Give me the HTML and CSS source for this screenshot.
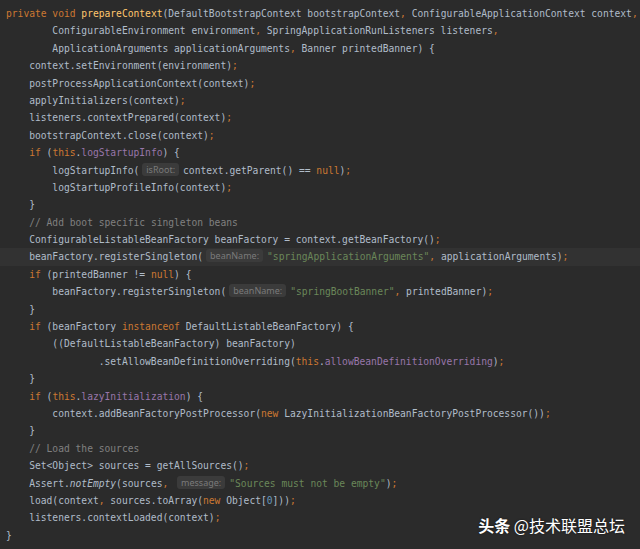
FILE: index.html
```html
<!DOCTYPE html>
<html lang="zh">
<head>
  <meta charset="UTF-8" />
  <meta name="viewport" content="width=device-width, initial-scale=1.0"/>
  <title>prepareContext</title>
  <link rel="stylesheet" href="styles.css">
</head>
<body>
  <div class="editor">
    <div class="code">
      <div class="line"><span class="kw">private void</span> <span class="fn">prepareContext</span>(DefaultBootstrapContext bootstrapContext<span class="kw">,</span> ConfigurableApplicationContext context<span class="kw">,</span></div>
      <div class="line">        ConfigurableEnvironment environment<span class="kw">,</span> SpringApplicationRunListeners listeners<span class="kw">,</span></div>
      <div class="line">        ApplicationArguments applicationArguments<span class="kw">,</span> Banner printedBanner) {</div>
      <div class="line">    context.setEnvironment(environment)<span class="kw">;</span></div>
      <div class="line">    postProcessApplicationContext(context)<span class="kw">;</span></div>
      <div class="line">    applyInitializers(context)<span class="kw">;</span></div>
      <div class="line">    listeners.contextPrepared(context)<span class="kw">;</span></div>
      <div class="line">    bootstrapContext.close(context)<span class="kw">;</span></div>
      <div class="line">    <span class="kw">if</span> (<span class="kw">this</span>.<span class="field">logStartupInfo</span>) {</div>
      <div class="line">        logStartupInfo(<span class="hint">isRoot:</span>context.getParent() == <span class="kw">null</span>)<span class="kw">;</span></div>
      <div class="line">        logStartupProfileInfo(context)<span class="kw">;</span></div>
      <div class="line">    }</div>
      <div class="line">    <span class="comment">// Add boot specific singleton beans</span></div>
      <div class="line">    ConfigurableListableBeanFactory beanFactory = context.getBeanFactory()<span class="kw">;</span></div>
      <div class="line current">    beanFactory.registerSingleton(<span class="hint">beanName:</span><span class="str">"springApplicationArguments"</span><span class="kw">,</span> applicationArguments)<span class="kw">;</span></div>
      <div class="line">    <span class="kw">if</span> (printedBanner != <span class="kw">null</span>) {</div>
      <div class="line">        beanFactory.registerSingleton(<span class="hint">beanName:</span><span class="str">"springBootBanner"</span><span class="kw">,</span> printedBanner)<span class="kw">;</span></div>
      <div class="line">    }</div>
      <div class="line">    <span class="kw">if</span> (beanFactory <span class="kw">instanceof</span> DefaultListableBeanFactory) {</div>
      <div class="line">        ((DefaultListableBeanFactory) beanFactory)</div>
      <div class="line">                .setAllowBeanDefinitionOverriding(<span class="kw">this</span>.<span class="field">allowBeanDefinitionOverriding</span>)<span class="kw">;</span></div>
      <div class="line">    }</div>
      <div class="line">    <span class="kw">if</span> (<span class="kw">this</span>.<span class="field">lazyInitialization</span>) {</div>
      <div class="line">        context.addBeanFactoryPostProcessor(<span class="kw">new</span> LazyInitializationBeanFactoryPostProcessor())<span class="kw">;</span></div>
      <div class="line">    }</div>
      <div class="line">    <span class="comment">// Load the sources</span></div>
      <div class="line">    Set&lt;Object&gt; sources = getAllSources()<span class="kw">;</span></div>
      <div class="line">    Assert.<span class="static">notEmpty</span>(sources<span class="kw">,</span> <span class="hint">message:</span><span class="str">"Sources must not be empty"</span>)<span class="kw">;</span></div>
      <div class="line">    load(context<span class="kw">,</span> sources.toArray(<span class="kw">new</span> Object[<span class="num">0</span>]))<span class="kw">;</span></div>
      <div class="line">    listeners.contextLoaded(context)<span class="kw">;</span></div>
      <div class="line">}</div>
    </div>
    <div class="watermark"><b>头条</b> @技术联盟总坛</div>
  </div>
</body>
</html>
```

FILE: styles.css
```css
* {
  box-sizing: border-box;
  margin: 0;
  padding: 0;
}

body, html {
  width: 100%;
  height: 100%;
  overflow: hidden;
  background: #2b2b2b;
}

.editor {
  position: relative;
  width: 640px;
  height: 549px;
  background: #2b2b2b;
}

.code {
  padding-top: 5px;
  font-family: "DejaVu Sans Mono", "Liberation Mono", monospace;
  font-size: 9.65px;
  color: #b0bcc9;
}

.line {
  height: 17.4px;
  line-height: 17.4px;
  padding-left: 6px;
  white-space: pre;
}

.line.current {
  background: #323232;
}

.kw { color: #cc7832; }
.fn { color: #ffc66d; }
.field { color: #9876aa; }
.str { color: #6a8759; }
.num { color: #6897bb; }
.comment { color: #808080; }
.static { font-style: italic; }

/* parameter hints */
.hint {
  display: inline-block;
  margin: 0 4px 0 3px;
  padding: 0 4px;
  height: 13px;
  line-height: 13px;
  border-radius: 3px;
  background: #3b3b3b;
  color: #7a7a7a;
  font-family: "Noto Sans", "Liberation Sans", sans-serif;
  font-size: 9px;
  vertical-align: 1px;
}

.watermark {
  position: absolute;
  right: 15px;
  bottom: 12px;
  color: #fff;
  font-family: "Noto Sans CJK SC", sans-serif;
  font-size: 16px;
  text-shadow: 0 0 2px rgba(0, 0, 0, 0.6);
}

.watermark b {
  font-weight: bold;
}
```
